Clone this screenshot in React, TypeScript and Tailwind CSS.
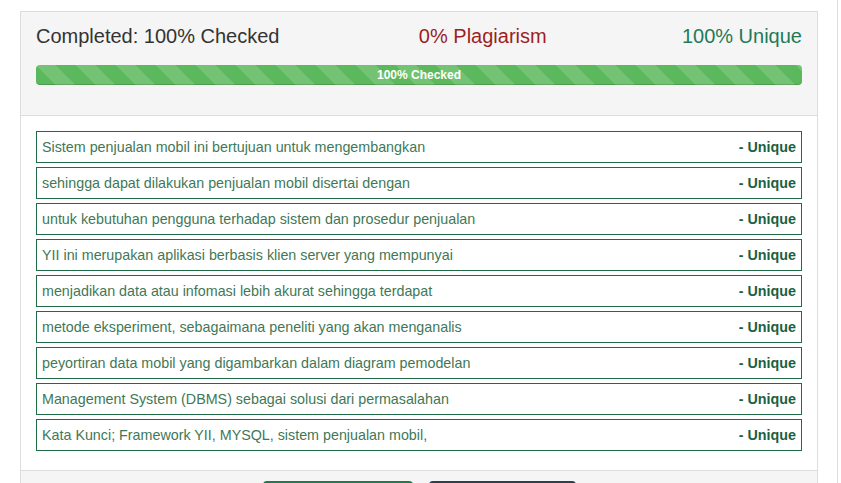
const sentences = [
  'Sistem penjualan mobil ini bertujuan untuk mengembangkan',
  'sehingga dapat dilakukan penjualan mobil disertai dengan',
  'untuk kebutuhan pengguna terhadap sistem dan prosedur penjualan',
  'YII ini merupakan aplikasi berbasis klien server yang mempunyai',
  'menjadikan data atau infomasi lebih akurat sehingga terdapat',
  'metode eksperiment, sebagaimana peneliti yang akan menganalis',
  'peyortiran data mobil yang digambarkan dalam diagram pemodelan',
  'Management System (DBMS) sebagai solusi dari permasalahan',
  'Kata Kunci; Framework YII, MYSQL, sistem penjualan mobil,',
];

export default function App() {
  return (
    <div className="min-h-screen bg-white flex font-['Liberation_Sans',Arial,sans-serif] text-[#333]">
      <div className="ml-5 mt-[11px] w-[798px] self-start border border-[#ddd] bg-white">
        <div className="bg-[#f5f5f5] border-b border-[#ddd] px-[15px] pt-[13px] pb-[30px]">
          <div className="grid grid-cols-3 text-[20px] leading-[22px]">
            <div className="text-[#333]">Completed: 100% Checked</div>
            <div className="text-right text-[#9c1f1f]">0% Plagiarism</div>
            <div className="text-right text-[#1f7a58]">100% Unique</div>
          </div>
          <div className="mt-[18px] h-5 rounded bg-[#5cb85c] bg-[linear-gradient(45deg,rgba(255,255,255,.15)_25%,transparent_25%,transparent_50%,rgba(255,255,255,.15)_50%,rgba(255,255,255,.15)_75%,transparent_75%,transparent)] bg-[length:40px_40px] text-center text-[12px] font-bold leading-5 text-white shadow-[inset_0_-1px_0_rgba(0,0,0,.15)]">
            100% Checked
          </div>
        </div>

        <div className="px-[15px] pt-[15px] pb-[19px] flex flex-col gap-1">
          {sentences.map((s) => (
            <div
              key={s}
              className="h-8 border border-[#1e6b45] flex items-center justify-between pl-[5px] pr-[5px] pt-[2px] text-[14.3px] text-[#3f7857]"
            >
              <span>{s}</span>
              <span className="font-bold text-[#1d6040]">- Unique</span>
            </div>
          ))}
        </div>

        <div className="border-t border-[#ddd] bg-[#f5f5f5] pt-[10px] pb-[10px] flex justify-center gap-4">
          <button className="h-[34px] w-[150px] rounded-sm bg-[#1e7b4b]" />
          <button className="h-[34px] w-[147px] rounded-sm bg-[#2c3e50]" />
        </div>
      </div>
      <div className="ml-[19px] w-px min-h-screen bg-[#ddd]" />
    </div>
  );
}
